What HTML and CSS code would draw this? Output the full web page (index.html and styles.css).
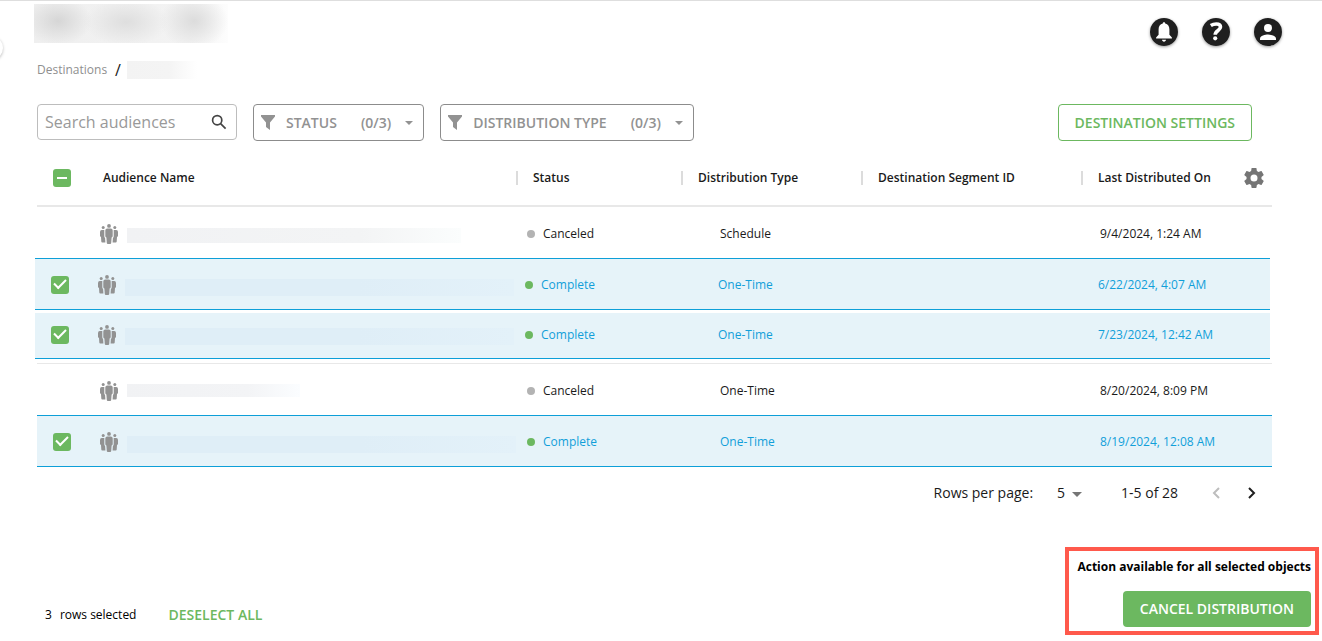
FILE: index.html
```html
<!DOCTYPE html>
<html lang="en">
<head>
<meta charset="utf-8">
<meta name="viewport" content="width=device-width, initial-scale=1">
<title>Destinations</title>
<link rel="stylesheet" href="styles.css">
</head>
<body>
<svg class="sprite" aria-hidden="true">
  <symbol id="people" viewBox="0 0 18 20">
    <circle cx="9" cy="1.900" r="1.900"/><circle cx="3.200" cy="3.400" r="1.500"/><circle cx="14.800" cy="3.400" r="1.500"/>
    <path d="M7.300 4.600h3.400q2 0 2 2v5.400q0 1-1.100 1.500l-.4 5.500q-.1 1-1.100 1H7.900q-1 0-1.100-1l-.4-5.500q-1.100-.5-1.100-1.500V6.600q0-2 2-2z"/>
    <path d="M1.800 6h2.500V12.300q0 1.200.8 1.700l.3 4.500H2.200q-.8 0-.9-1L1 13q-1-.4-1-1.200V8q0-2 1.800-2z"/>
    <path d="M16.200 6h-2.500V12.300q0 1.200-.8 1.700l-.3 4.500h3.200q.8 0 .9-1L17 13q1-.4 1-1.200V8q0-2-1.800-2z"/>
  </symbol>
  <symbol id="funnel" viewBox="0 0 14 15"><path d="M0 0h14v1.500L9 7.500V15l-4-3V7.500L0 1.500z"/></symbol>
  <symbol id="caret" viewBox="0 0 10 5"><path d="M0 0h10L5 5z"/></symbol>
</svg>

<span class="drawer-handle" aria-hidden="true"></span>

<header class="page-header">
  <div class="title-redacted"></div>
  <nav class="header-actions" aria-label="Account">
    <button class="round-button" type="button" aria-label="Notifications">
      <svg viewBox="0 0 28 28"><circle cx="14" cy="14" r="14" fill="#1f1f1f"/><path fill="#fff" d="M14 4.300c.8 0 1.200.5 1.200 1.200 2.800.7 4.200 3 4.200 5.700v5.600l2.500 2.700v1H6.100v-1l2.500-2.700v-5.600c0-2.700 1.400-5 4.200-5.700 0-.7.400-1.200 1.200-1.200zM12 21.800h4c0 1.100-.9 1.900-2 1.900s-2-.8-2-1.900z"/></svg>
    </button>
    <button class="round-button" type="button" aria-label="Help">
      <svg viewBox="0 0 28 28"><circle cx="14" cy="14" r="14" fill="#1f1f1f"/><path fill="none" stroke="#fff" stroke-width="3.600" d="M8.800 7.600C10.500 6.500 12.300 6 14.300 6c2.800 0 4.200 1.200 4.200 3.100 0 3.500-5.300 3.300-5.300 7.700"/><circle cx="13.200" cy="20.300" r="2.100" fill="#fff"/></svg>
    </button>
    <button class="round-button" type="button" aria-label="Profile">
      <svg viewBox="0 0 28 28"><circle cx="14" cy="14" r="14" fill="#1f1f1f"/><circle cx="14" cy="10" r="4" fill="#fff"/><path fill="#fff" d="M6 22v-1.500c0-2.700 5.300-4 8-4s8 1.300 8 4V22z"/></svg>
    </button>
  </nav>
</header>

<main class="content">
  <nav class="breadcrumb" aria-label="Breadcrumb">
    <a href="#">Destinations</a><span class="slash">/</span><span class="crumb-redacted"></span>
  </nav>

  <div class="toolbar">
    <label class="search">
      <input type="text" placeholder="Search audiences" aria-label="Search audiences">
      <svg viewBox="0 0 16 16" aria-hidden="true"><circle cx="6.200" cy="6.200" r="4.600"/><path d="M9.600 9.600l5 5"/></svg>
    </label>
    <button class="filter" type="button" aria-haspopup="listbox">
      <svg class="funnel"><use href="#funnel"/></svg><span class="filter-name">STATUS</span><span>(0/3)</span><svg class="caret"><use href="#caret"/></svg>
    </button>
    <button class="filter" type="button" aria-haspopup="listbox">
      <svg class="funnel"><use href="#funnel"/></svg><span class="filter-name">DISTRIBUTION TYPE</span><span>(0/3)</span><svg class="caret"><use href="#caret"/></svg>
    </button>
    <button class="button-outline" type="button">DESTINATION SETTINGS</button>
  </div>

  <table class="audiences">
    <thead>
      <tr>
        <th class="pick"><input class="check partial" type="checkbox" aria-label="Select all rows"></th>
        <th class="name">Audience Name</th>
        <th>Status</th>
        <th>Distribution Type</th>
        <th>Destination Segment ID</th>
        <th class="last">Last Distributed On<button class="gear" type="button" aria-label="Table settings"><svg viewBox="2 2 20 20"><path d="M19.430 12.980c.04-.32.070-.64.070-.98s-.03-.66-.07-.98l2.110-1.650c.19-.15.240-.42.120-.64l-2-3.460c-.12-.22-.39-.3-.61-.22l-2.490 1c-.52-.4-1.080-.73-1.690-.98l-.38-2.650C14.460 2.180 14.250 2 14 2h-4c-.25 0-.46.180-.49.420l-.38 2.650c-.61.250-1.170.590-1.690.98l-2.490-1c-.23-.09-.49 0-.61.220l-2 3.460c-.13.220-.07.490.12.640l2.110 1.650c-.04.320-.07.650-.07.980s.03.660.07.980l-2.110 1.650c-.19.150-.24.420-.12.640l2 3.460c.12.220.39.300.61.220l2.490-1c.52.400 1.080.730 1.690.980l.38 2.650c.03.240.240.420.490.420h4c.25 0 .46-.18.490-.42l.38-2.650c.61-.25 1.170-.59 1.690-.98l2.490 1c.23.090.490 0 .61-.22l2-3.460c.12-.22.070-.49-.12-.64zM12 15.500A3.500 3.500 0 1 1 12 8.500a3.500 3.500 0 0 1 0 7z"/></svg></button></th>
      </tr>
    </thead>
    <tbody>
      <tr>
        <td class="pick"></td>
        <td class="name"><svg class="people"><use href="#people"/></svg><span class="redacted long"></span></td>
        <td class="status"><span class="dot"></span>Canceled</td>
        <td>Schedule</td><td></td><td>9/4/2024, 1:24 AM</td>
      </tr>
    </tbody>
    <tbody class="staggered">
      <tr class="selected">
        <td class="pick"><input class="check" type="checkbox" checked aria-label="Select row"></td>
        <td class="name"><svg class="people"><use href="#people"/></svg><span class="redacted tinted"></span></td>
        <td class="status"><span class="dot"></span>Complete</td>
        <td>One-Time</td><td></td><td>6/22/2024, 4:07 AM</td>
      </tr>
      <tr class="selected compact">
        <td class="pick"><input class="check" type="checkbox" checked aria-label="Select row"></td>
        <td class="name"><svg class="people"><use href="#people"/></svg><span class="redacted tinted"></span></td>
        <td class="status"><span class="dot"></span>Complete</td>
        <td>One-Time</td><td></td><td>7/23/2024, 12:42 AM</td>
      </tr>
    </tbody>
    <tbody class="ruled">
      <tr>
        <td class="pick"></td>
        <td class="name"><svg class="people"><use href="#people"/></svg><span class="redacted short"></span></td>
        <td class="status"><span class="dot"></span>Canceled</td>
        <td>One-Time</td><td></td><td>8/20/2024, 8:09 PM</td>
      </tr>
      <tr class="selected">
        <td class="pick"><input class="check" type="checkbox" checked aria-label="Select row"></td>
        <td class="name"><svg class="people"><use href="#people"/></svg><span class="redacted tinted"></span></td>
        <td class="status"><span class="dot"></span>Complete</td>
        <td>One-Time</td><td></td><td>8/19/2024, 12:08 AM</td>
      </tr>
    </tbody>
  </table>

  <div class="pagination">
    <label for="page-size">Rows per page:</label>
    <span class="page-size"><select id="page-size"><option>5</option><option>10</option><option>25</option></select><svg class="caret"><use href="#caret"/></svg></span>
    <span class="range">1-5 of 28</span>
    <button class="step" type="button" aria-label="Previous page" disabled><svg viewBox="0 0 8 12"><path d="M7 1L2 6l5 5"/></svg></button>
    <button class="step" type="button" aria-label="Next page"><svg viewBox="0 0 8 12"><path d="M1 1l5 5-5 5"/></svg></button>
  </div>
</main>

<footer class="selection-bar">
  <div class="selection-info">
    <span>3</span><span>rows selected</span>
    <button class="link-button" type="button">DESELECT ALL</button>
  </div>
  <section class="bulk-action">
    <p>Action available for all selected objects</p>
    <button class="button-solid" type="button">CANCEL DISTRIBUTION</button>
  </section>
</footer>
</body>
</html>
```

FILE: styles.css
```css
* { box-sizing: border-box; }

body {
  margin: 0;
  border-top: 1px solid #dedede;
  background: #fff;
  color: #1a1a1a;
  font: 12px/16px "Open Sans", "Noto Sans", sans-serif;
}

button, input, select { font: inherit; color: inherit; }
button { padding: 0; border: 0; background: none; cursor: pointer; }
svg { display: block; flex: none; }

.sprite { position: absolute; width: 0; height: 0; }

.drawer-handle {
  position: absolute;
  top: 36px;
  left: -21px;
  width: 24px;
  height: 24px;
  border-radius: 50%;
  background: #fff;
  box-shadow: 0 1px 3px rgba(0, 0, 0, 0.25);
}

/* Header */
.page-header {
  display: flex;
  justify-content: space-between;
  padding: 3px 40px 0 34px;
}

.title-redacted {
  width: 194px;
  height: 39px;
  background:
    radial-gradient(ellipse 34px 24px at 24px 17px, #d6d6d6, transparent),
    radial-gradient(ellipse 42px 24px at 92px 18px, #dedede, transparent),
    radial-gradient(ellipse 34px 28px at 160px 17px, #dcdcdc, transparent),
    linear-gradient(90deg, #efefef, #f3f3f3 80%, #fdfdfd);
}

.header-actions { display: flex; gap: 24px; padding-top: 14px; }

.round-button {
  width: 28px;
  height: 28px;
  border-radius: 50%;
  box-shadow: 0 1px 3px rgba(0, 0, 0, 0.4);
}

/* Content */
.content { padding: 0 50px 0 37px; }

.breadcrumb {
  display: flex;
  align-items: center;
  height: 18px;
  margin-top: 15px;
}

.breadcrumb a { color: #8f8f8f; text-decoration: none; }
.slash { margin: 0 6px 0 8px; font-size: 16px; }

.crumb-redacted {
  width: 70px;
  height: 18px;
  background: linear-gradient(90deg, #f3f3f3, #f4f4f4 60%, #fff);
}

.toolbar {
  display: flex;
  gap: 16px;
  align-items: flex-start;
  margin: 25px 20px 0 0;
}

.search {
  display: flex;
  align-items: center;
  width: 200px;
  height: 36px;
  padding: 0 9px 0 7px;
  border: 1px solid #bdbdbd;
  border-radius: 4px;
}

.search input {
  flex: 1;
  min-width: 0;
  padding: 0;
  border: 0;
  outline: 0;
  font-size: 16px;
}

.search input::placeholder { color: #999; opacity: 1; }
.search svg { width: 16px; height: 16px; fill: none; stroke: #444; stroke-width: 1.700; }

.filter {
  display: flex;
  align-items: center;
  height: 37px;
  padding: 0 10px 0 7px;
  border: 1px solid #8c8c8c;
  border-radius: 4px;
  color: #929292;
  font-size: 14px;
  font-weight: 600;
}

.filter svg { fill: currentColor; }
.funnel { width: 14px; height: 15px; margin-right: 11px; }
.filter-name { margin-right: 24px; }
.filter .caret { width: 8px; height: 4px; margin-left: 14px; }

.button-outline {
  height: 37px;
  margin-left: auto;
  padding: 0 16px;
  border: 1px solid #6cb860;
  border-radius: 4px;
  color: #6cb860;
  font-size: 14px;
  font-weight: 600;
}

/* Table */
.audiences, .audiences thead, .audiences tbody { display: block; }

.audiences tr {
  display: grid;
  grid-template-columns: 63px minmax(200px, 1fr) 165px 180px 220px 191px;
  align-items: center;
  height: 51px;
  padding-top: 2px;
}

.audiences thead tr { height: 66px; padding-top: 10px; border-bottom: 2px solid #e8e8e8; }

.audiences th {
  padding: 0 0 0 15px;
  border-left: 2px solid #dcdcdc;
  font-weight: 600;
  line-height: 14px;
  text-align: left;
}

.audiences th.pick { padding-left: 16px; border: 0; line-height: 18px; }
.audiences th.name { padding-left: 3px; border: 0; }
.audiences th.last { display: flex; align-items: center; justify-content: space-between; height: 14px; padding-right: 8px; }
.audiences td { padding: 0 0 0 19px; }
.audiences td:nth-child(4) { padding-left: 39px; }
.audiences td.pick { padding-left: 16px; }
.audiences td.name { display: flex; align-items: center; gap: 9px; padding-left: 0; }
.audiences td.status { display: flex; align-items: center; gap: 8px; padding-left: 11px; }

.gear { width: 20px; height: 20px; fill: #757575; }

.check {
  display: block;
  width: 18px;
  height: 18px;
  margin: 0;
  appearance: none;
  border-radius: 3px;
  background: #6cb860;
  position: relative;
}

.check::after {
  content: "";
  position: absolute;
  top: 4px;
  left: 3px;
  width: 12px;
  height: 7px;
  border: solid #fff;
  border-width: 0 0 2px 2px;
  transform: rotate(-45deg);
}

.check:checked::after { top: 3px; }

.check.partial::after {
  top: 8px;
  left: 4px;
  width: 10px;
  height: 2px;
  border: 0;
  background: #fff;
  transform: none;
}

.check::after { box-sizing: border-box; }

.audiences .selected {
  height: 52px;
  border: solid #0d9fd8;
  border-width: 1px 0;
  background: #e6f3f9;
  color: #119fd9;
}

.audiences .compact { height: 46px; margin-top: 3px; padding: 0 0 2px; border-top: 0; }
.staggered { margin: 0 2px 0 -2px; }
.ruled { margin-top: 4px; border-top: 1px solid #e8e8e8; }

.people { width: 18px; height: 20px; fill: #929292; }
.dot { width: 8px; height: 8px; border-radius: 50%; background: #b3b3b3; }
.selected .dot { background: #6cb860; }

.redacted { height: 15px; margin-top: 4px; }
.redacted.long { width: 334px; background: linear-gradient(90deg, #f1f2f4, #f3f4f5 70%, #fbfdfd); }
.redacted.short { width: 173px; height: 13px; margin-top: 0; background: linear-gradient(90deg, #f1f2f4, #f3f4f6 70%, #fbfdff); }
.redacted.tinted { width: 394px; height: 17px; background: linear-gradient(90deg, #dfeef7, #dfeef7 60%, #e3f1f9); }

/* Pagination */
.pagination {
  display: flex;
  align-items: center;
  justify-content: flex-end;
  height: 52px;
  padding-right: 16px;
  font-size: 14px;
}

.page-size { display: flex; align-items: center; margin: 0 39px 0 24px; }
.page-size select { padding: 0; border: 0; outline: 0; background: none; appearance: none; width: 15px; }
.page-size .caret { width: 10px; height: 5px; fill: #757575; margin-top: 2px; }
.range { margin-right: 34px; }
.step { width: 8px; height: 12px; }
.step svg { fill: none; stroke: #1f1f1f; stroke-width: 2; }
.step:disabled svg { stroke: #bdbdbd; }
.step + .step { margin-left: 28px; }

/* Selection bar */
.selection-bar {
  display: flex;
  align-items: flex-end;
  justify-content: space-between;
  margin-top: 28px;
  padding: 0 3px 6px 45px;
  color: #000;
}

.selection-info { display: flex; align-items: center; gap: 8px; height: 40px; }
.link-button { margin-left: 24px; color: #6cb860; font-size: 14px; font-weight: 600; }

.bulk-action {
  display: flex;
  flex-direction: column;
  align-items: flex-end;
  gap: 16px;
  padding: 8px 4px 4px 8px;
  border: 4px solid #ff594c;
}

.bulk-action p { margin: 0; font-weight: 700; }

.button-solid {
  height: 36px;
  padding: 0 17px;
  border-radius: 4px;
  background: #6cb860;
  color: #fff;
  font-size: 14px;
  font-weight: 600;
}
```
